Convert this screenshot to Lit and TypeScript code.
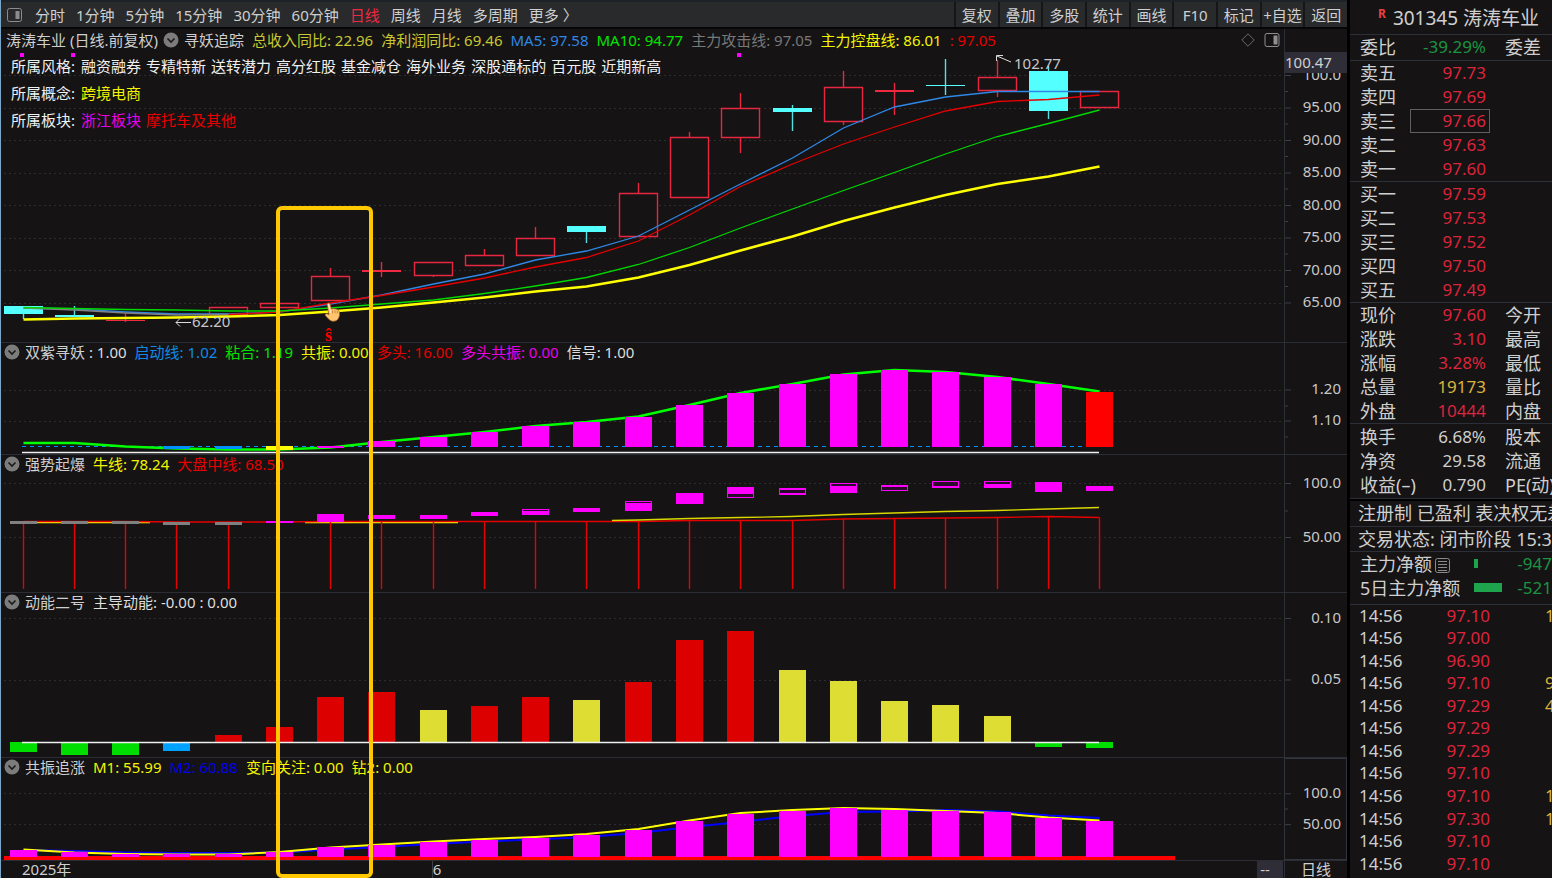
import { LitElement, html, svg, css, nothing } from "lit";
import { customElement, property } from "lit/decorators.js";
import { classMap } from "lit/directives/class-map.js";

type Run = [string, string];
type Candle = { kind: "up" | "down"; top: number; bottom: number; high?: number; low?: number };
type Tick = { y: number; label?: string };

// Shared horizontal scale: 22 trading days across the plot width.
const LEFT = 1;
const WIDTH = 1283;
const cx = (i: number) => Math.round(22.5 + i * 51.27) + 0.5;
const px = (x: number) => `${((x - LEFT) / WIDTH) * 100}%`;
const points = (ys: number[], from = 0) => ys.map((y, i) => `${cx(i + from)},${y}`).join(" ");

const PERIODS = ["分时", "1分钟", "5分钟", "15分钟", "30分钟", "60分钟", "日线", "周线", "月线", "多周期", "更多 〉"];
const TOOLS = ["复权", "叠加", "多股", "统计", "画线", "F10", "标记", "+自选", "返回"];
const STYLES = ["融资融券", "专精特新", "送转潜力", "高分红股", "基金减仓", "海外业务", "深股通标的", "百元股", "近期新高"];

const CANDLES: Candle[] = [
  { kind: "down", top: 306, bottom: 314, low: 319 },
  { kind: "down", top: 315, bottom: 317, high: 306 },
  { kind: "up", top: 320, bottom: 321, high: 313, low: 322 },
  { kind: "up", top: 317, bottom: 318 },
  { kind: "up", top: 307, bottom: 314 },
  { kind: "up", top: 303, bottom: 307 },
  { kind: "up", top: 276, bottom: 300, high: 268 },
  { kind: "up", top: 270, bottom: 272, high: 262, low: 277 },
  { kind: "up", top: 262, bottom: 275, low: 277 },
  { kind: "up", top: 255, bottom: 265, high: 249 },
  { kind: "up", top: 238, bottom: 255, high: 227 },
  { kind: "down", top: 226, bottom: 232, low: 243 },
  { kind: "up", top: 193, bottom: 236, high: 183 },
  { kind: "up", top: 137, bottom: 197, high: 132 },
  { kind: "up", top: 108, bottom: 137, high: 93, low: 153 },
  { kind: "down", top: 108, bottom: 112, high: 105, low: 131 },
  { kind: "up", top: 87, bottom: 121, high: 71, low: 125 },
  { kind: "up", top: 90, bottom: 92, high: 83, low: 115 },
  { kind: "down", top: 85, bottom: 86, high: 59, low: 95 },
  { kind: "up", top: 77, bottom: 90, high: 60, low: 97 },
  { kind: "down", top: 71, bottom: 111, high: 66, low: 119 },
  { kind: "up", top: 91, bottom: 107 },
];

const MA5 = [308, 309, 312, 314, 314, 312, 304, 295, 284, 274, 260, 251, 236, 210, 184, 158, 128, 107, 97, 91.5, 91.5, 91.5];
const ATTACK_GREY = [308, 310, 313, 315, 314.5];
const ATTACK = [314.5, 312, 303, 295.5, 287, 278, 267, 257.5, 241, 215, 186.5, 164, 144, 127, 111, 101.5, 99.5, 95];
const MA10 = [307.5, 308.5, 309.5, 310, 311, 311, 308, 304, 300, 293.5, 286, 277.5, 264.5, 247.5, 228, 209, 190.5, 172.5, 154, 136.5, 123.5, 110];
const CONTROL = [319.5, 318.5, 318, 317.5, 316.5, 315, 311.5, 307.5, 302.5, 297.5, 291.5, 286.5, 277.5, 265, 250.5, 236.5, 221, 207.5, 195, 184, 176.5, 166.5];

const GLUE = [443, 443, 446.5, 448.5, 449.5, 449.5, 447.5, 442, 437, 432, 426, 422, 416.5, 405, 393, 384, 374.5, 370, 372, 377, 384, 391.5];
const GLUE_BARS = [441, 437, 432, 426, 422, 417, 405, 393, 384, 374, 370, 372, 377, 384, 392];

const POWER: [number, number, number?, number?][] = [
  [521, 523], [514, 522], [515, 519], [515, 519], [512, 516], [509, 515, 510, 511], [508, 512], [501, 511, 502, 503],
  [493, 504], [487, 498, 494, 497], [488, 495, 490, 493], [483, 493, 484, 486], [485, 491, 487, 490],
  [481, 488, 482, 486], [481, 488, 482, 484], [482, 492], [486, 491],
];

const MOMENTUM: [string, number][] = [
  ["lime", 752], ["lime", 755], ["lime", 755], ["sky", 751], ["red", 735], ["red", 727], ["red", 697], ["red", 692],
  ["olive", 710], ["red", 706], ["red", 697], ["olive", 700], ["red", 682], ["red", 640], ["red", 631], ["olive", 670],
  ["olive", 681], ["olive", 701], ["olive", 705], ["olive", 716], ["lime", 747], ["lime", 748],
];

const RES_BARS = [850, 852, 854, 854, 854, 852, 847, 845, 842, 840, 838, 835, 830, 821, 814, 811, 808, 810, 811, 812, 818, 821];
const M1 = [849.5, 852.5, 854, 854.5, 854.5, 852, 847.5, 844.5, 841.5, 839, 837, 834, 829, 820.5, 813, 810, 808, 809, 811, 813, 817.5, 820.5];
const M2 = [850, 851, 852.5, 853, 853, 852.5, 849.5, 847, 844, 841.5, 839.5, 837, 833, 827, 822, 816, 812, 811.5, 810, 811.5, 815.5, 818];

const base = css`
  :host {
    font-family: "Noto Sans", "Noto Sans CJK SC", sans-serif;
    font-size: 15px;
    line-height: 24px;
    color: #cfcfcf;
  }
  * { box-sizing: border-box; }
  button { font: inherit; color: inherit; background: none; border: 0; padding: 0; margin: 0; cursor: pointer; white-space: nowrap; }
`;

/** One indicator pane: legend over a plot, with its value scale at the right. */
@customElement("chart-pane")
export class ChartPane extends LitElement {
  @property({ attribute: false }) top = 0;
  @property({ attribute: false }) extent = 100;
  @property({ attribute: false }) ticks: Tick[] = [];
  @property({ attribute: false }) plot: unknown = nothing;
  @property({ attribute: false }) notes: unknown = nothing;
  @property({ attribute: false }) current = "";
  @property({ type: Boolean, reflect: true }) framed = false;

  static styles = [base, css`
    :host { display: grid; grid-template: minmax(0, 1fr) / minmax(0, 1fr) 63px; min-height: 0; overflow: hidden; }
    .plot, .legend { grid-area: 1 / 1; min-width: 0; min-height: 0; }
    .canvas { display: block; width: 100%; height: 100%; overflow: hidden; }
    .legend { z-index: 1; }
    .scale { display: grid; min-height: 0; border-left: 1px solid #2b2f36; }
    :host([framed]) .scale { border: 1px solid #30343c; }
    .scale > * { grid-area: 1 / 1; min-height: 0; }
    .current { align-self: start; z-index: 1; margin-top: 23px; height: 21px; line-height: 20px; background: #2e2d38; color: #d0d0d0; }
    .grid { stroke: #2d2d30; stroke-dasharray: 2 3; }
    .mark { stroke: #3a3f48; }
    text { fill: #c8c8c8; }
    .geometry * { vector-effect: non-scaling-stroke; }
    .crisp { shape-rendering: crispEdges; }
    .line { fill: none; stroke-width: 1.3; }
    .line.mid { stroke-width: 2; }
    .line.thick { stroke-width: 2.6; }
    .stem { stroke-width: 1.4; }
    .up { stroke: #e8263f; fill: #151314; }
    .down { stroke: #54e0e0; }
    .fill-up { fill: #f02840; } .fill-down { fill: #54ffff; }
    .s-blue { stroke: #2f88e6; } .s-red { stroke: #e60000; } .s-green { stroke: #00d800; } .s-yellow { stroke: #ffff00; }
    .s-grey { stroke: #808080; } .s-lime { stroke: #00ff00; } .s-white { stroke: #f0f0f0; } .s-navy { stroke: #0000ff; }
    .s-azure { stroke: #0090ff; stroke-dasharray: 4 4; } .s-gold { stroke: #d8d800; }
    .magenta { fill: #ff00ff; } .pure { fill: #ff0000; } .red { fill: #dd0000; } .lime { fill: #00dd00; } .sky { fill: #00a2ff; }
    .azure { fill: #0090ff; } .olive { fill: #dddd33; } .yellow { fill: #ffff00; } .grey { fill: #808080; } .slit { fill: #2a0a2a; }
    .white { stroke: #dcdcdc; fill: none; }
    .signal { fill: #ff0000; font: bold 18px "Liberation Serif", serif; }
  `];

  private pct(y: number) {
    return `${((y - this.top) / this.extent) * 100}%`;
  }

  render() {
    return html`
      <div class="plot">
        <svg class="canvas">
          ${this.ticks.filter((t) => t.label).map((t) => svg`<line class="grid crisp" x1="3" x2="100%" y1=${this.pct(t.y)} y2=${this.pct(t.y)}></line>`)}
          <svg class="geometry" viewBox="${LEFT} ${this.top} ${WIDTH} ${this.extent}" preserveAspectRatio="none">${this.plot}</svg>
          ${this.notes}
        </svg>
      </div>
      <div class="legend"><slot></slot></div>
      <div class="scale">
        <svg class="canvas">
          ${this.ticks.map((t) => svg`
            <line class="mark" x1="0" x2=${t.label ? 6 : 3} y1=${this.pct(t.y)} y2=${this.pct(t.y)}></line>
            ${t.label ? svg`<text x="56" y=${this.pct(t.y)} dy="4" text-anchor="end">${t.label}</text>` : nothing}`)}
        </svg>
        ${this.current ? html`<div class="current">${this.current}</div>` : nothing}
      </div>`;
  }
}

/** Quote column: order book, figures and the tape. */
@customElement("quote-panel")
export class QuotePanel extends LitElement {
  static styles = [base, css`
    :host { display: flex; flex-direction: column; min-width: 0; overflow: hidden; white-space: nowrap; font-size: 17px; background: #151314; }
    h1 { margin: 0; height: 34px; padding-left: 28px; font-size: 19px; font-weight: 400; line-height: 36px; display: flex; gap: 7px; }
    h1 sup { font-size: 12px; font-weight: 700; line-height: 28px; color: #e84040; }
    table { width: 100%; table-layout: fixed; border-collapse: collapse; border-top: 1px solid #2b2f38; flex: none; }
    tr { height: 24px; }
    th, td { padding: 0; font-weight: 400; line-height: 24px; text-align: left; overflow: hidden; }
    th { font-size: 18px; padding-left: 10px; overflow: visible; }
    .value { text-align: right; padding-right: 4px; }
    th.second { padding-left: 15px; }
    .c-label { width: 60px; }
    .c-value { width: 80px; }
    .ratio tr { height: 25px; }
    .block { border-top: 1px solid #2b2f38; flex: none; }
    .up { color: #dc243c; }
    .down { color: #1b9443; }
    .gold { color: #dcb43c; }
    .picked { box-shadow: inset 0 0 0 1px #606060; }
    .status { height: 25px; line-height: 24px; padding-left: 8px; font-size: 18px; border-top: 1px solid #2b2f38; flex: none; }
    .status.first { border-top: 2px solid #000; height: 27px; }
    .figures { border-bottom: 1px solid #2b2f38; padding: 1px 0; }
    .figures table, .flow table { border-top: 0; }
    .flow { padding-bottom: 4px; }
    .flow .c-label { width: 124px; }
    .flow .c-value { width: 30px; }
    .flow .value { padding-right: 0; }
    .meter { display: block; height: 9px; background: #1ea44c; }
    .flow svg { vertical-align: -2px; margin-left: 3px; }
    .tape { flex: 1; display: flex; min-height: 0; border-top: 1px solid #2b2f38; padding-bottom: 3px; }
    .tape table { flex: 1; border-top: 0; }
    .tape tr { height: auto; }
    .tape td { line-height: 22px; padding-left: 9px; overflow: visible; }
    .tape td.value { padding: 0; }
    .tape td.gold { padding-left: 55px; }
  `];

  private rows(list: [string, string, string, string?][]) {
    return html`<table>
      <colgroup><col class="c-label" /><col class="c-value" /><col /></colgroup>
      <tbody>${list.map(([label, value, tone, second]) => html`<tr>
        <th scope="row">${label}</th>
        <td class="value ${tone}">${value}</td>
        ${second ? html`<th class="second">${second}</th>` : html`<td></td>`}
      </tr>`)}</tbody>
    </table>`;
  }

  render() {
    const tape: [string, string][] = [
      ["97.10", "1"], ["97.00", ""], ["96.90", ""], ["97.10", "9"], ["97.29", "4"], ["97.29", ""],
      ["97.29", ""], ["97.10", ""], ["97.10", "1"], ["97.30", "1"], ["97.10", ""], ["97.10", ""],
    ];
    return html`
      <h1><sup>R</sup><span>301345 涛涛车业</span></h1>
      <div class="ratio">${this.rows([["委比", "-39.29%", "down", "委差"]])}</div>
      ${this.rows([["卖五", "97.73", "up"], ["卖四", "97.69", "up"], ["卖三", "97.66", "up picked"], ["卖二", "97.63", "up"], ["卖一", "97.60", "up"]])}
      ${this.rows([["买一", "97.59", "up"], ["买二", "97.53", "up"], ["买三", "97.52", "up"], ["买四", "97.50", "up"], ["买五", "97.49", "up"]])}
      ${this.rows([["现价", "97.60", "up", "今开"], ["涨跌", "3.10", "up", "最高"], ["涨幅", "3.28%", "up", "最低"], ["总量", "19173", "gold", "量比"], ["外盘", "10444", "up", "内盘"]])}
      <div class="block figures">${this.rows([["换手", "6.68%", "", "股本"], ["净资", "29.58", "", "流通"], ["收益(–)", "0.790", "", "PE(动)"]])}</div>
      <div class="status first">注册制 已盈利 表决权无差</div>
      <div class="status">交易状态: 闭市阶段 15:30</div>
      <div class="block flow"><table>
        <colgroup><col class="c-label" /><col class="c-value" /><col /></colgroup>
        <tbody>
          <tr><th scope="row">主力净额<svg width="15" height="15" fill="none" stroke="#8a8a8a"><rect x=".5" y=".5" width="14" height="14" rx="2"></rect><path d="M3 3.5h9M3 6.5h9M3 9.5h9M3 12.5h9"></path></svg></th>
            <td><span class="meter" style="width:4px"></span></td><td class="down value">-947</td></tr>
          <tr><th scope="row">5日主力净额</th>
            <td><span class="meter" style="width:28px"></span></td><td class="down value">-521</td></tr>
        </tbody></table></div>
      <div class="tape"><table>
        <colgroup><col class="c-label" /><col class="c-value" /><col /></colgroup>
        <tbody>${tape.map(([price, lots]) => html`<tr><td>14:56</td><td class="value up">${price}</td><td class="gold">${lots}</td></tr>`)}</tbody>
      </table></div>`;
  }
}

@customElement("app-root")
export class AppRoot extends LitElement {
  static styles = [base, css`
    :host { display: grid; grid-template-columns: minmax(0, 1fr) 202px; height: 100vh; background: #151314; overflow: hidden; }
    .desk { display: flex; flex-direction: column; min-width: 0; min-height: 0; border-left: 1px solid #7aa6c8; border-right: 3px solid #000; }
    .toolbar { display: flex; flex: none; height: 29px; border-top: 2px solid #1c2228; border-bottom: 2px solid #060606; background: #282a2c; }
    .periods { display: flex; flex: 1; align-items: center; gap: 11px; padding-left: 6px; min-width: 0; overflow: hidden; }
    .periods svg { flex: none; margin-right: 1px; }
    .active { color: #f02840; }
    .tools { display: grid; grid-template-columns: repeat(9, 1fr); width: 393px; flex: none; }
    .tools button { border-left: 2px solid #151617; overflow: hidden; }
    .panes {
      position: relative; flex: 1; min-height: 0; display: grid;
      grid-template-rows: minmax(0, 313fr) minmax(0, 112fr) minmax(0, 138fr) minmax(0, 165fr) minmax(0, 103fr) 18px;
    }
    .pane { border-top: 1px solid #2b2d35; }
    .pane.first { border-top: 0; }
    .legend { display: flex; align-items: center; gap: 8px; padding-left: 3px; height: 18px; white-space: nowrap; }
    .first .legend { height: 22px; padding-left: 5px; }
    .name { display: flex; align-items: center; gap: 5px; }
    .fold { display: grid; flex: none; }
    .spacer { flex: 1; }
    .legend .end { display: flex; gap: 9px; padding-right: 4px; align-items: center; }
    .facts { display: grid; grid-template-columns: max-content 1fr; column-gap: 6px; margin: 0; padding: 2px 0 0 10px; line-height: 27px; color: #f0f0f0; white-space: nowrap; }
    .facts dd { display: flex; gap: 5px; margin: 0; }
    .white { color: #dedede; } .olive { color: #c8c832; } .blue { color: #2f88e6; } .green { color: #00e400; } .grey { color: #787878; }
    .yellow { color: #f4f400; } .red { color: #e60000; } .azure { color: #0f8ae8; } .magenta { color: #e800e8; } .navy { color: #0000ee; }
    .dates { display: grid; grid-template-columns: minmax(0, 1fr) 63px; border-top: 1px solid #2b2d35; line-height: 17px; }
    .dates .days { display: grid; grid-template-columns: 431fr 826fr 26px; padding-right: 1px; }
    .days .year { padding-left: 21px; }
    .days .month { border-left: 1px solid #3a3f48; }
    .days .none { background: #2e2d38; text-align: center; padding-right: 10px; }
    .dates .mode { border-left: 1px solid #2b2f36; text-align: center; }
    .highlight {
      position: absolute; z-index: 3; pointer-events: none; border: 4px solid #ffc800; border-radius: 6px; bottom: 0; top: 20.8%;
      left: calc((100% - 63px) * 275 / 1283); width: calc((100% - 63px) * 97 / 1283);
    }
  `];

  private fold(name: string) {
    return html`<button class="fold" aria-label="收起${name}"><svg width="16" height="16"><circle cx="8" cy="8" r="7.5" fill="#7c7c7c"></circle><path d="M4.5 6.5 8 10l3.5-3.5" fill="none" stroke="#1a1a1a" stroke-width="1.6"></path></svg></button>`;
  }

  private legend(name: string, runs: Run[], joined = false) {
    return html`<div class="legend">
      <span class="name">${this.fold(name)}<span>${name}${joined ? html`<span class="white"> : 1.00</span>` : nothing}</span></span>
      ${runs.map(([tone, text]) => html`<span class=${tone}>${text}</span>`)}
    </div>`;
  }

  private candle(c: Candle, i: number) {
    const x = cx(i);
    const solid = c.kind === "down" || c.bottom - c.top <= 2;
    const high = c.high ?? c.top;
    const low = c.low ?? c.bottom;
    const body = solid
      ? svg`<rect class="crisp fill-${c.kind}" x=${x - 19.5} y=${c.top} width="39" height=${c.bottom - c.top}></rect>`
      : svg`<rect class="up stem" x=${x - 19} y=${c.top + 0.5} width="38" height=${c.bottom - c.top}></rect>`;
    return svg`<g><line class="stem ${c.kind}" x1=${x} x2=${x} y1=${high} y2=${low}></line>${body}</g>`;
  }

  private bar(i: number, top: number, bottom: number, tone: string) {
    return svg`<rect class="crisp ${tone}" x=${cx(i) - 13.5} y=${top} width="27" height=${bottom - top}></rect>`;
  }

  private line(tone: string, ys: number[], from = 0) {
    return svg`<polyline class="line ${tone}" points=${points(ys, from)}></polyline>`;
  }

  private pricePlot() {
    return svg`
      ${[20, 71, 737].map((x) => svg`<rect class="magenta crisp" x=${x} y="53" width="4" height="4"></rect>`)}
      ${CANDLES.map((c, i) => this.candle(c, i))}
      ${this.line("s-blue", MA5)}
      ${this.line("s-grey", ATTACK_GREY)}
      ${this.line("s-red", ATTACK, 4)}
      ${this.line("s-green", MA10)}
      ${this.line("thick s-yellow", CONTROL)}`;
  }

  private priceNotes() {
    const y = (v: number) => `${((v - 29) / 313) * 100}%`;
    return svg`
      <svg class="white" x=${px(996)} y=${y(55)} width="18" height="10"><path d="M1 1 15 7M7 .5H.5V6"></path></svg>
      <text x=${px(1014)} y=${y(69)}>102.77</text>
      <svg class="white" x=${px(175)} y=${y(317)} width="18" height="10"><path d="M1 5.5H16M5 1.5 1 5.5 5 9.5"></path></svg>
      <text x=${px(192)} y=${y(327)}>62.20</text>
      <text class="signal" x=${px(325)} y=${y(341)}>ŝ</text>
      <svg x=${px(324)} y=${y(302)} width="17" height="20" viewBox="0 0 17 20">
        <path d="M4 1.2c1.1-.4 1.9.2 2.2 1.3L7.4 7c2.8-.9 7-.2 7.9 2.5.9 3-.1 7.300-2.700 9-2.300 1.300-5.600.9-7.200-.7L1.700 14c-1.300-1.500.1-3 1.600-2.200l1.600.9L3.200 3.200C3 2.200 3.200 1.500 4 1.200Z" fill="#ffc56e" stroke="#9a5a20" stroke-width=".7"></path>
        <path d="M8.500 8.500v3M11 8.300v3M13.300 9v2.600" stroke="#c0782c" fill="none" stroke-width=".8"></path>
        <path d="M4.500 2.200 6.800 11" stroke="#fff0d0" fill="none"></path>
      </svg>`;
  }

  private gluePlot() {
    return svg`
      <line class="s-azure" x1="22" x2="1099" y1="446.500" y2="446.500"></line>
      ${this.line("thick s-lime", GLUE)}
      <line class="s-white line" x1="22" x2="1099" y1="452.500" y2="452.500"></line>
      ${this.bar(3, 446, 449, "azure")}${this.bar(4, 446, 449, "azure")}${this.bar(5, 446, 450, "yellow")}${this.bar(6, 446, 448, "magenta")}
      ${GLUE_BARS.map((y, i) => this.bar(i + 7, y, 447, i === GLUE_BARS.length - 1 ? "pure" : "magenta"))}`;
  }

  private powerPlot() {
    const red = [521.5, 521.5, 521.5, 522, 522, 522, 521.5, 521.5, 521.5, 521.5, 521.5, 521.5, 521.5, 520.5, 520.5, 520.5, 519, 518.5, 518, 517.5, 516.5, 517.5];
    return svg`
      <path class="line s-yellow" d="M36 522.500H150M305 522.500H458"></path>
      ${this.line("s-red", red)}
      ${red.map((y, i) => (i === 5 ? nothing : svg`<line class="s-red stem" x1=${cx(i)} x2=${cx(i)} y1=${y} y2="589"></line>`))}
      <polyline class="line s-gold" points="612,520.500 638,520 689,518.500 740,517.500 791,516.500 843,514.500 894,513 945,511.500 997,510.500 1048,509 1099,507.500"></polyline>
      ${[0, 1, 2, 3, 4].map((i) => this.bar(i, i < 3 ? 521 : 522, i < 3 ? 524 : 525, "grey"))}
      ${POWER.map(([top, bottom, a, b], i) => svg`
        ${this.bar(i + 5, top, bottom, "magenta")}
        ${a && b ? svg`<rect class="slit crisp" x=${cx(i + 5) - 12.5} y=${a} width="25" height=${b - a}></rect>` : nothing}`)}`;
  }

  private momentumPlot() {
    return svg`
      ${MOMENTUM.map(([tone, y], i) => this.bar(i, Math.min(y, 742), Math.max(y, 742), tone))}
      <line class="s-white line" x1="22" x2="1099" y1="742.500" y2="742.500"></line>`;
  }

  private resonancePlot() {
    return svg`
      <rect class="pure crisp" x="4" y="856" width="1171" height="4"></rect>
      ${this.line("mid s-navy", M2)}
      ${this.line("mid s-yellow", M1)}
      ${RES_BARS.map((y, i) => this.bar(i, y, 857, "magenta"))}`;
  }

  render() {
    const priceTicks: Tick[] = ["100.0", "95.00", "90.00", "85.00", "80.00", "75.00", "70.00", "65.00"]
      .flatMap((label, i) => {
        const y = 75.5 + i * 32.5;
        return i < 7 ? [{ y, label }, { y: y + 16 }] : [{ y, label }];
      });
    return html`
      <main class="desk">
        <div class="toolbar">
          <nav class="periods">
            <svg width="16" height="14" fill="none" stroke="#8c8c8c"><rect x=".5" y=".5" width="14" height="13" rx="2"></rect><path d="M10.500 3v8" stroke-width="4"></path></svg>
            ${PERIODS.map((p) => html`<button class=${classMap({ active: p === "日线" })}>${p}</button>`)}
          </nav>
          <div class="tools">${TOOLS.map((t) => html`<button>${t}</button>`)}</div>
        </div>
        <div class="panes">
          <chart-pane class="pane first" .top=${29} .extent=${313} .ticks=${priceTicks} .plot=${this.pricePlot()} .notes=${this.priceNotes()} .current=${"100.47"}>
            <div class="legend">
              <span class="name"><span>涛涛车业 (日线.前复权)</span>${this.fold("主图")}<span>寻妖追踪</span></span>
              <span class="olive">总收入同比: 22.96</span><span class="olive">净利润同比: 69.46</span>
              <span class="blue">MA5: 97.58</span><span class="green">MA10: 94.77</span>
              <span class="grey">主力攻击线: 97.05</span><span class="yellow">主力控盘线: 86.01</span><span class="red">: 97.05</span>
              <span class="spacer"></span>
              <span class="end">
                <svg width="14" height="14" fill="none" stroke="#6c6c6c"><path d="M7 .8 13.200 7 7 13.200.8 7Z"></path></svg>
                <svg width="16" height="14" fill="none" stroke="#909090"><rect x="1" y=".5" width="14" height="13" rx="2"></rect><path d="M11.500 2.500v9" stroke-width="4"></path></svg>
              </span>
            </div>
            <dl class="facts">
              <dt>所属风格:</dt><dd>${STYLES.map((s) => html`<span>${s}</span>`)}</dd>
              <dt>所属概念:</dt><dd class="yellow">跨境电商</dd>
              <dt>所属板块:</dt><dd><span class="magenta">浙江板块</span><span class="red">摩托车及其他</span></dd>
            </dl>
          </chart-pane>
          <chart-pane class="pane" .top=${343} .extent=${111} .ticks=${[{ y: 390, label: "1.20" }, { y: 406 }, { y: 421, label: "1.10" }, { y: 437 }]} .plot=${this.gluePlot()}>
            ${this.legend("双紫寻妖", [["azure", "启动线: 1.02"], ["green", "粘合: 1.19"], ["yellow", "共振: 0.00"], ["red", "多头: 16.00"], ["magenta", "多头共振: 0.00"], ["white", "信号: 1.00"]], true)}
          </chart-pane>
          <chart-pane class="pane" .top=${455} .extent=${137} .ticks=${[{ y: 483.5, label: "100.0" }, { y: 511 }, { y: 537.5, label: "50.00" }]} .plot=${this.powerPlot()}>
            ${this.legend("强势起爆", [["yellow", "牛线: 78.24"], ["red", "大盘中线: 68.50"]])}
          </chart-pane>
          <chart-pane class="pane" .top=${593} .extent=${164} .ticks=${[{ y: 618.5, label: "0.10" }, { y: 680, label: "0.05" }]} .plot=${this.momentumPlot()}>
            ${this.legend("动能二号", [["white", "主导动能: -0.00 : 0.00"]])}
          </chart-pane>
          <chart-pane class="pane" framed .top=${758} .extent=${102} .ticks=${[{ y: 793.5, label: "100.0" }, { y: 809 }, { y: 825, label: "50.00" }]} .plot=${this.resonancePlot()}>
            ${this.legend("共振追涨", [["yellow", "M1: 55.99"], ["navy", "M2: 60.88"], ["yellow", "变向关注: 0.00"], ["yellow", "钻2: 0.00"]])}
          </chart-pane>
          <div class="dates">
            <div class="days"><span class="year">2025年</span><span class="month">6</span><span class="none">--</span></div>
            <span class="mode">日线</span>
          </div>
          <div class="highlight"></div>
        </div>
      </main>
      <quote-panel></quote-panel>`;
  }
}
